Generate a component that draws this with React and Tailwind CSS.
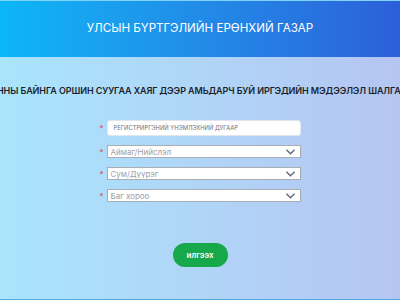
import React from "react";

function Chevron() {
  return (
    <svg width="9" height="6" viewBox="0 0 10 6" className="shrink-0">
      <path d="M1 1 L5 5 L9 1" fill="none" stroke="#6b7280" strokeWidth="1.8" strokeLinecap="round" strokeLinejoin="round" />
    </svg>
  );
}

function Star() {
  return <span className="w-[6px] text-[8px] leading-none text-[#e5484d]">*</span>;
}

function SelectRow({ label }) {
  return (
    <div className="flex items-center gap-[1px]">
      <Star />
      <div className="flex h-[13px] w-[194px] items-center justify-between border border-[#a9adb4] bg-white pl-[3px] pr-[5px]">
        <span className="text-[8px] leading-none text-[#9aa0a8]">{label}</span>
        <Chevron />
      </div>
    </div>
  );
}

export default function App() {
  return (
    <div
      className="flex h-[300px] w-[400px] flex-col overflow-hidden bg-gradient-to-r from-[#a9e5fc] to-[#b5c5f2]"
      style={{ fontFamily: "Inter, 'Noto Sans', sans-serif" }}
    >
      <header className="flex h-[57px] shrink-0 items-center justify-center border-t border-[#7fd3f5] bg-gradient-to-r from-[#0bb6f6] to-[#2c5fd9]">
        <h1 className="text-[11.6px] font-normal text-white">УЛСЫН БҮРТГЭЛИЙН ЕРӨНХИЙ ГАЗАР</h1>
      </header>

      <div className="mt-[28px] flex h-[10px] items-center overflow-hidden whitespace-nowrap">
        <span className="-ml-[3px] text-[9px] font-semibold leading-none tracking-[-0.1px] text-[#1b1f2a]">
          ННЫ БАЙНГА ОРШИН СУУГАА ХАЯГ ДЭЭР АМЬДАРЧ БУЙ ИРГЭДИЙН МЭДЭЭЛЭЛ ШАЛГАХ
        </span>
      </div>

      <div className="mt-[25px] flex flex-col items-center">
        <div className="flex flex-col gap-[9px]">
          <div className="flex items-center gap-[1px]">
            <Star />
            <div className="flex h-[16px] w-[194px] items-center rounded-[3px] border border-[#dfe6ee] bg-white pl-[6px]">
              <span className="text-[5.8px] leading-none text-[#6b7280]">РЕГИСТРИРГЭНИЙ ҮНЭМЛЭХНИЙ ДУГААР</span>
            </div>
          </div>
          <SelectRow label="Аймаг/Нийслэл" />
          <SelectRow label="Сум/Дүүрэг" />
          <SelectRow label="Баг хороо" />
        </div>

        <button className="mt-[41px] flex h-[24px] w-[55px] items-center justify-center rounded-full bg-[#17a84b] text-[8px] font-semibold text-white">
          илгээх
        </button>
      </div>

      <div className="mt-auto h-[1px] bg-[#55a9dc]" />
    </div>
  );
}
